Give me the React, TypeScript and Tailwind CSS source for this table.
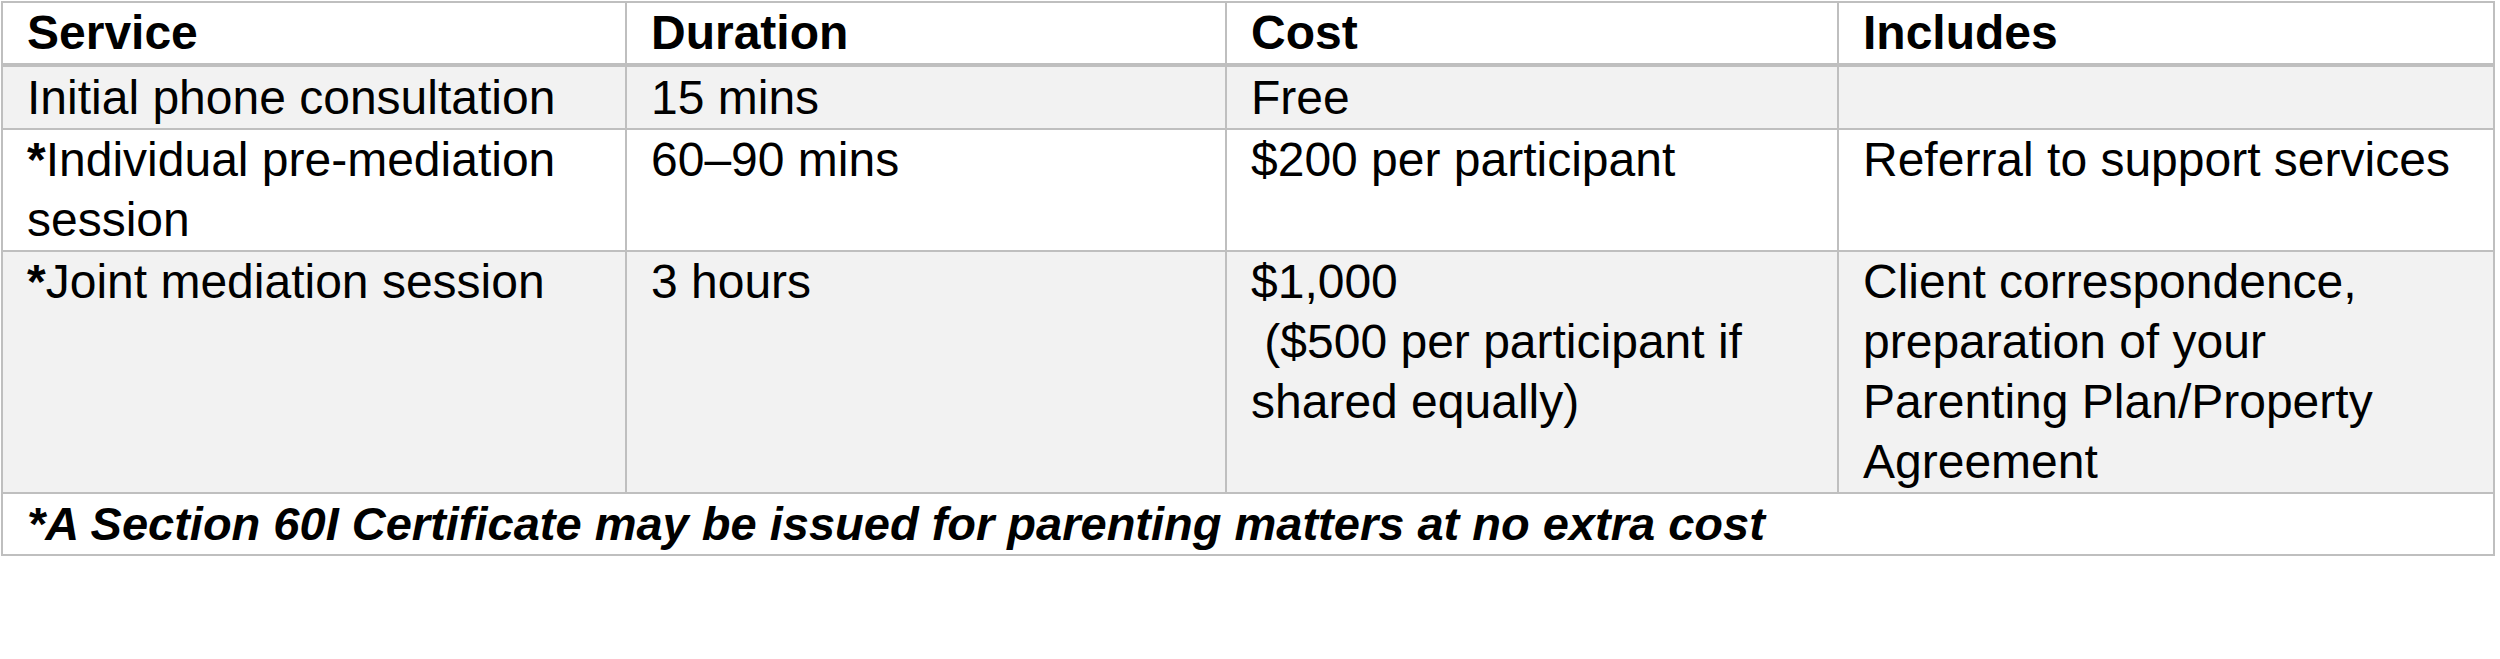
import React from "react";

type Row = {
  service: React.ReactNode;
  duration: string;
  cost: React.ReactNode;
  includes: React.ReactNode;
  shaded: boolean;
};

const ROWS: Row[] = [
  {
    service: "Initial phone consultation",
    duration: "15 mins",
    cost: "Free",
    includes: "",
    shaded: true,
  },
  {
    service: (
      <>
        <span className="font-bold">*</span>Individual pre-mediation
        <br />
        session
      </>
    ),
    duration: "60–90 mins",
    cost: "$200 per participant",
    includes: "Referral to support services",
    shaded: false,
  },
  {
    service: (
      <>
        <span className="font-bold">*</span>Joint mediation session
      </>
    ),
    duration: "3 hours",
    cost: (
      <>
        $1,000
        <br />
        &nbsp;($500 per participant if
        <br />
        shared equally)
      </>
    ),
    includes: (
      <>
        Client correspondence,
        <br />
        preparation of your
        <br />
        Parenting Plan/Property
        <br />
        Agreement
      </>
    ),
    shaded: true,
  },
];

const cell =
  "border-2 border-[#bfbfbf] px-[24px] py-0 align-top text-left whitespace-nowrap";

export default function App() {
  return (
    <div className="w-[2500px] h-[659px] bg-white text-black pt-px pl-px font-['Liberation_Sans',Arial,sans-serif] text-[48px] leading-[60px]">
      <table className="table-fixed border-collapse w-[2492px]">
        <colgroup>
          <col className="w-[624px]" />
          <col className="w-[600px]" />
          <col className="w-[612px]" />
          <col className="w-[656px]" />
        </colgroup>
        <thead>
          <tr className="bg-white">
            {["Service", "Duration", "Cost", "Includes"].map((h) => (
              <th key={h} className={`${cell} border-b-[4px] font-bold`}>
                {h}
              </th>
            ))}
          </tr>
        </thead>
        <tbody>
          {ROWS.map((row, i) => (
            <tr key={i} className={row.shaded ? "bg-[#f2f2f2]" : "bg-white"}>
              <td className={`${cell} ${i === 0 ? "pt-px" : ""}`}>{row.service}</td>
              <td className={`${cell} ${i === 0 ? "pt-px" : ""}`}>{row.duration}</td>
              <td className={`${cell} ${i === 0 ? "pt-px" : ""}`}>{row.cost}</td>
              <td className={`${cell} ${i === 0 ? "pt-px" : ""}`}>{row.includes}</td>
            </tr>
          ))}
          <tr className="bg-white">
            <td colSpan={4} className={`${cell} font-bold italic text-[47px]`}>
              *A Section 60I Certificate may be issued for parenting matters at no extra cost
            </td>
          </tr>
        </tbody>
      </table>
    </div>
  );
}
